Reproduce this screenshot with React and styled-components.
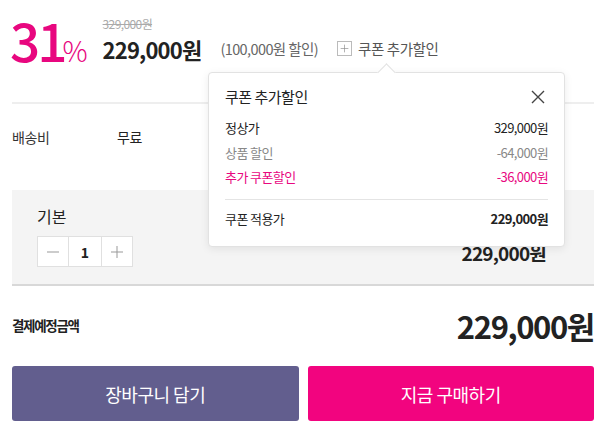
import React from 'react'
import styled, { createGlobalStyle } from 'styled-components'

const GlobalStyle = createGlobalStyle`
  body {
    margin: 0;
    background: #fff;
    font-family: "Noto Sans CJK KR", "Noto Sans", sans-serif;
    color: #222;
  }
`

const PINK = '#e8077f'

const Page = styled.div`
  width: 600px;
  height: 429px;
  padding: 0 6px 0 12px;
  box-sizing: border-box;
  overflow: hidden;
`

const PriceRow = styled.div`
  display: flex;
  align-items: flex-end;
  height: 64px;
  padding-bottom: 38px;
  border-bottom: 2px solid #eee;
  position: relative;
`

const Rate = styled.div`
  color: ${PINK};
  font-size: 53px;
  line-height: 1;
  letter-spacing: -3px;
  font-weight: 500;
  margin: 0 15px -2px -2px;
`

const Percent = styled.span`
  font-size: 28px;
  font-weight: 300;
  letter-spacing: 0;
  margin-left: -2px;
`

const Prices = styled.div`
  display: flex;
  flex-direction: column;
  margin-bottom: 2px;
`

const OldPrice = styled.span`
  font-size: 12px;
  color: #aaa;
  text-decoration: line-through;
  letter-spacing: -0.6px;
  line-height: 14px;
  margin-bottom: 5px;
`

const NowPrice = styled.span`
  font-size: 22px;
  font-weight: 700;
  letter-spacing: -0.8px;
  line-height: 26px;
`

const Saving = styled.span`
  font-size: 14.5px;
  color: #666;
  letter-spacing: -0.6px;
  margin: 0 19px 5px 19px;
`

const CouponToggle = styled.div`
  position: relative;
  display: flex;
  align-items: center;
  gap: 6px;
  font-size: 14.5px;
  color: #555;
  letter-spacing: -0.4px;
  margin-bottom: 5px;
`

const PlusBox = styled.span`
  width: 13px;
  height: 13px;
  border: 1px solid #bbb;
  display: inline-flex;
  align-items: center;
  justify-content: center;
`

const Popup = styled.div`
  position: absolute;
  top: 34px;
  left: -129px;
  width: 357px;
  box-sizing: border-box;
  background: #fff;
  border: 1px solid #e2e2e2;
  border-radius: 4px;
  box-shadow: 0 2px 8px rgba(0, 0, 0, 0.08);
  padding: 13px 16px 15px 16px;
  z-index: 10;
  color: #222;

  &::before {
    content: '';
    position: absolute;
    top: -7px;
    left: 171px;
    width: 12px;
    height: 12px;
    background: #fff;
    border-left: 1px solid #e2e2e2;
    border-top: 1px solid #e2e2e2;
    transform: rotate(45deg);
  }
`

const PopupHead = styled.div`
  display: flex;
  justify-content: space-between;
  align-items: center;
  font-size: 15px;
  letter-spacing: -0.5px;
  margin-bottom: 9px;
`

const CloseBtn = styled.span`
  display: inline-flex;
  margin-right: 3px;
`

const Line = styled.div`
  display: flex;
  justify-content: space-between;
  font-size: 13px;
  line-height: 24.5px;
  letter-spacing: -0.6px;
  color: ${p => (p.$tone === 'pink' ? PINK : p.$tone === 'gray' ? '#888' : '#222')};
`

const Value = styled.span`
  font-weight: ${p => (p.$bold ? 700 : 400)};
`

const PopupDivider = styled.div`
  border-top: 1px solid #e4e4e4;
  margin: 9px 0 7px;
`

const ShipRow = styled.div`
  display: flex;
  align-items: flex-start;
  height: 86px;
  box-sizing: border-box;
  padding-top: 23px;
  font-size: 14px;
  letter-spacing: -0.4px;
`

const ShipLabel = styled.span`
  width: 105px;
  color: #333;
`

const OptionBox = styled.div`
  background: #f4f4f4;
  border-bottom: 2px solid #d8d8d8;
  height: 96px;
  box-sizing: border-box;
  padding: 14px 48px 0 25px;
  display: flex;
  justify-content: space-between;
`

const OptionLeft = styled.div`
  display: flex;
  flex-direction: column;
  gap: 8px;
`

const OptionName = styled.span`
  font-size: 16px;
  line-height: 24px;
`

const Stepper = styled.div`
  display: flex;
  border: 1px solid #e0e0e0;
  background: #fff;
  width: fit-content;
`

const StepCell = styled.span`
  width: ${p => (p.$wide ? 32 : 30)}px;
  height: 29px;
  display: flex;
  align-items: center;
  justify-content: center;
  font-size: 14px;
  font-weight: 700;
  & + & {
    border-left: 1px solid #e0e0e0;
  }
`

const OptionPrice = styled.span`
  align-self: flex-end;
  margin-bottom: 18px;
  font-size: 19px;
  font-weight: 700;
  letter-spacing: -0.8px;
`

const TotalRow = styled.div`
  display: flex;
  justify-content: space-between;
  align-items: center;
  height: 78px;
`

const TotalLabel = styled.span`
  font-size: 13.5px;
  font-weight: 700;
  letter-spacing: -1.3px;
`

const TotalPrice = styled.span`
  font-size: 31px;
  font-weight: 700;
  letter-spacing: -1.4px;
`

const Buttons = styled.div`
  display: grid;
  grid-template-columns: 1fr 1fr;
  gap: 9px;
  margin-top: 2px;
`

const ActionButton = styled.button`
  height: 55px;
  border: none;
  border-radius: 3px;
  background: ${p => (p.$primary ? '#f2047f' : '#625e8e')};
  color: #fff;
  font-family: inherit;
  font-size: 18px;
  letter-spacing: -0.5px;
`

const Minus = () => (
  <svg width="14" height="14" viewBox="0 0 14 14">
    <path d="M1 7h12" stroke="#999" strokeWidth="1" />
  </svg>
)

const Plus = ({ size = 14, color = '#999' }) => (
  <svg width={size} height={size} viewBox="0 0 14 14">
    <path d="M1 7h12M7 1v12" stroke={color} strokeWidth="1" />
  </svg>
)

const CloseIcon = () => (
  <svg width="14" height="14" viewBox="0 0 14 14">
    <path d="M1 1l12 12M13 1L1 13" stroke="#444" strokeWidth="1.4" />
  </svg>
)

const App = () => (
  <Page>
    <GlobalStyle />
    <PriceRow>
      <Rate>
        31<Percent>%</Percent>
      </Rate>
      <Prices>
        <OldPrice>329,000원</OldPrice>
        <NowPrice>229,000원</NowPrice>
      </Prices>
      <Saving>(100,000원 할인)</Saving>
      <CouponToggle>
        <PlusBox>
          <Plus size={9} color="#888" />
        </PlusBox>
        쿠폰 추가할인
        <Popup>
          <PopupHead>
            쿠폰 추가할인
            <CloseBtn>
              <CloseIcon />
            </CloseBtn>
          </PopupHead>
          <Line>
            <span>정상가</span>
            <Value>329,000원</Value>
          </Line>
          <Line $tone="gray">
            <span>상품 할인</span>
            <Value>-64,000원</Value>
          </Line>
          <Line $tone="pink">
            <span>추가 쿠폰할인</span>
            <Value>-36,000원</Value>
          </Line>
          <PopupDivider />
          <Line>
            <span>쿠폰 적용가</span>
            <Value $bold>229,000원</Value>
          </Line>
        </Popup>
      </CouponToggle>
    </PriceRow>

    <ShipRow>
      <ShipLabel>배송비</ShipLabel>
      <span>무료</span>
    </ShipRow>

    <OptionBox>
      <OptionLeft>
        <OptionName>기본</OptionName>
        <Stepper>
          <StepCell>
            <Minus />
          </StepCell>
          <StepCell $wide>1</StepCell>
          <StepCell>
            <Plus />
          </StepCell>
        </Stepper>
      </OptionLeft>
      <OptionPrice>229,000원</OptionPrice>
    </OptionBox>

    <TotalRow>
      <TotalLabel>결제예정금액</TotalLabel>
      <TotalPrice>229,000원</TotalPrice>
    </TotalRow>

    <Buttons>
      <ActionButton>장바구니 담기</ActionButton>
      <ActionButton $primary>지금 구매하기</ActionButton>
    </Buttons>
  </Page>
)

export default App
